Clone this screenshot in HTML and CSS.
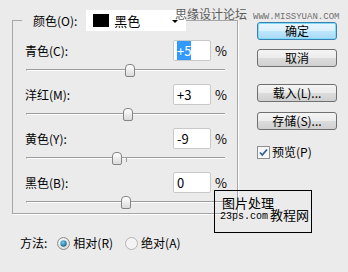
FILE: index.html
```html
<!DOCTYPE html>
<html lang="zh-CN">
<head>
  <meta charset="UTF-8">
  <title>可选颜色</title>
  <link rel="stylesheet" href="styles.css">
</head>
<body>
  <div class="dialog">
    <div class="main">
      <fieldset class="group">
        <legend class="group-head">
          <span class="lbl">颜色(O):</span>
          <div class="select">
            <span class="swatch"></span>
            <span class="select-text">黑色</span>
            <span class="arrow"></span>
          </div>
        </legend>

        <div class="row">
          <div class="line">
            <span class="name">青色(C):</span>
            <div class="field"><span class="sel">+5</span></div>
            <span class="pct">%</span>
          </div>
          <div class="slider"><div class="track"></div><span class="tick"></span><span class="thumb" style="left:52.5%"></span></div>
        </div>

        <div class="row">
          <div class="line">
            <span class="name">洋红(M):</span>
            <div class="field">+3</div>
            <span class="pct">%</span>
          </div>
          <div class="slider"><div class="track"></div><span class="tick"></span><span class="thumb" style="left:51.5%"></span></div>
        </div>

        <div class="row">
          <div class="line">
            <span class="name">黄色(Y):</span>
            <div class="field">-9</div>
            <span class="pct">%</span>
          </div>
          <div class="slider"><div class="track"></div><span class="tick"></span><span class="thumb" style="left:45.5%"></span></div>
        </div>

        <div class="row">
          <div class="line">
            <span class="name">黑色(B):</span>
            <div class="field">0</div>
            <span class="pct">%</span>
          </div>
          <div class="slider"><div class="track"></div><span class="tick"></span><span class="thumb" style="left:50%"></span></div>
        </div>
      </fieldset>

      <div class="method">
        <span class="method-lbl">方法:</span>
        <label class="radio">
          <svg width="13" height="13" viewBox="0 0 13 13">
            <defs>
              <radialGradient id="rg1" cx="0.4" cy="0.35" r="0.7">
                <stop offset="0" stop-color="#ffffff"/>
                <stop offset="1" stop-color="#d6d6d6"/>
              </radialGradient>
              <radialGradient id="dot" cx="0.4" cy="0.35" r="0.7">
                <stop offset="0" stop-color="#6fd0f0"/>
                <stop offset="1" stop-color="#1b5f86"/>
              </radialGradient>
            </defs>
            <circle cx="6.5" cy="6.5" r="6" fill="url(#rg1)" stroke="#8a8a8a"/>
            <circle cx="6.5" cy="6.5" r="3.2" fill="url(#dot)"/>
          </svg>
          <span>相对(R)</span>
        </label>
        <label class="radio">
          <svg width="13" height="13" viewBox="0 0 13 13">
            <circle cx="6.5" cy="6.5" r="6" fill="#f3f3f3" stroke="#b4b4b4"/>
          </svg>
          <span>绝对(A)</span>
        </label>
      </div>
    </div>

    <div class="side">
      <button class="btn default">确定</button>
      <button class="btn cancel">取消</button>
      <button class="btn load">载入(L)...</button>
      <button class="btn store">存储(S)...</button>
      <label class="check">
        <svg width="13" height="13" viewBox="0 0 13 13">
          <rect x="0.5" y="0.5" width="12" height="12" fill="#f7f7f7" stroke="#8e8f8f"/>
          <path d="M3 6.5 L5.3 9 L10 3.5" fill="none" stroke="#2f5f9a" stroke-width="1.8"/>
        </svg>
        <span>预览(P)</span>
      </label>
    </div>

    <div class="mark-top">思缘设计论坛<span class="mark-url">WWW.MISSYUAN.COM</span></div>
    <div class="mark-box">
      <div class="mark-a">图片处理</div>
      <div class="mark-b">23ps.com</div>
      <div class="mark-c">教程网</div>
    </div>
  </div>
</body>
</html>
```

FILE: styles.css
```css
body {
  margin: 0;
  background: #ebebeb;
  color: #000;
  font-family: "Noto Sans CJK SC", "Liberation Sans", sans-serif;
  font-size: 12px;
}
.dialog {
  position: relative;
  width: 348px;
  height: 272px;
  display: flex;
  padding-left: 12px;
  box-sizing: border-box;
}
.main { width: 226px; }

/* group box */
.group {
  box-sizing: border-box;
  width: 226px;
  margin: 10px 0 0;
  padding: 9px 10px 4px 12px;
  border: 1px solid #a6a6a6;
  box-shadow: 1px 1px 0 #fff;
}
.group-head {
  display: flex;
  align-items: center;
  margin-left: -3px;
  padding: 0 0 0 11px;
  height: 21px;
}
.lbl { line-height: 14px; }
.select {
  position: relative;
  display: flex;
  align-items: center;
  width: 100px;
  height: 21px;
  margin-left: 9px;
  background: #fff;
}
.swatch {
  width: 16px;
  height: 13px;
  margin-left: 7px;
  background: #000;
}
.select-text { margin-left: 5px; font-size: 13px; line-height: 14px; }
.arrow {
  position: absolute;
  right: 8px;
  top: 10px;
  border-left: 3px solid transparent;
  border-right: 3px solid transparent;
  border-top: 3px solid #000;
}

/* rows */
.row { margin-bottom: 7px; }
.row:last-child { margin-bottom: 0; }
.line {
  display: flex;
  align-items: center;
  height: 21px;
}
.name { flex: 1; line-height: 14px; }
.field {
  box-sizing: border-box;
  width: 38px;
  height: 21px;
  padding: 2px 3px;
  background: #fff;
  border: 1px solid #c9c9c9;
  border-radius: 2px;
  font-size: 13px;
  line-height: 15px;
}
.sel { background: #3399ff; color: #fff; }
.pct { width: 12px; margin-left: 4px; font-size: 13px; line-height: 14px; }

.slider {
  position: relative;
  height: 16px;
  margin: 0 2px 0 1px;
}
.track {
  position: relative;
  top: 8px;
  height: 0;
  border-top: 1px solid #9c9c9c;
  border-bottom: 1px solid #fff;
  border-left: 1px solid #9c9c9c;
}
.tick {
  position: absolute;
  left: 50%;
  top: 9px;
  width: 1px;
  height: 4px;
  background: #9c9c9c;
}
.thumb {
  position: absolute;
  top: 3px;
  width: 8px;
  height: 11px;
  transform: translateX(-50%);
  border: 1px solid #858585;
  border-radius: 4px 4px 2px 2px;
  background: linear-gradient(#ffffff, #dadada);
}

/* method */
.method {
  display: flex;
  align-items: center;
  margin-top: 22px;
  margin-left: 8px;
  height: 14px;
}
.method-lbl { line-height: 14px; margin-right: 10px; }
.radio {
  display: flex;
  align-items: center;
  gap: 3px;
  margin-right: 12px;
  line-height: 14px;
}

/* right side */
.side {
  display: flex;
  flex-direction: column;
  margin-left: 19px;
  padding-top: 22px;
}
.btn {
  width: 80px;
  height: 18px;
  padding: 0;
  border: 1px solid #707070;
  border-radius: 3px;
  background: linear-gradient(#f4f4f4 0%, #ececec 50%, #dcdcdc 51%, #d0d0d0 100%);
  font-family: "Noto Sans CJK SC", "Liberation Sans", sans-serif;
  font-size: 12px;
  line-height: 14px;
  color: #000;
}
.default {
  border-color: #3c7fb1;
  box-shadow: inset 0 0 0 1px #7fdcf8;
  background: linear-gradient(#eaf6fd 0%, #d9f0fc 50%, #bee6fd 51%, #a7d9f5 100%);
}
.cancel { margin-top: 9px; }
.load { margin-top: 17px; }
.store { margin-top: 10px; }
.check {
  display: flex;
  align-items: center;
  gap: 2px;
  margin-top: 15px;
  line-height: 14px;
}

/* watermarks */
.mark-top {
  position: absolute;
  left: 175px;
  top: 7px;
  color: #5a5a5a;
  font-size: 12px;
  line-height: 14px;
}
.mark-url {
  margin-left: 6px;
  font-family: "Liberation Mono", monospace;
  font-size: 9px;
  color: #707070;
}
.mark-box {
  position: absolute;
  left: 214px;
  top: 190px;
  width: 98px;
  height: 43px;
  box-sizing: border-box;
  border: 1px solid #000;
}
.mark-a {
  position: absolute;
  left: 7px;
  top: 4px;
  font-size: 13px;
  line-height: 15px;
}
.mark-b {
  position: absolute;
  left: 5px;
  top: 20px;
  font-family: "Liberation Mono", monospace;
  font-size: 10px;
  line-height: 12px;
}
.mark-c {
  position: absolute;
  left: 55px;
  top: 15px;
  font-size: 13px;
  line-height: 17px;
}
```
